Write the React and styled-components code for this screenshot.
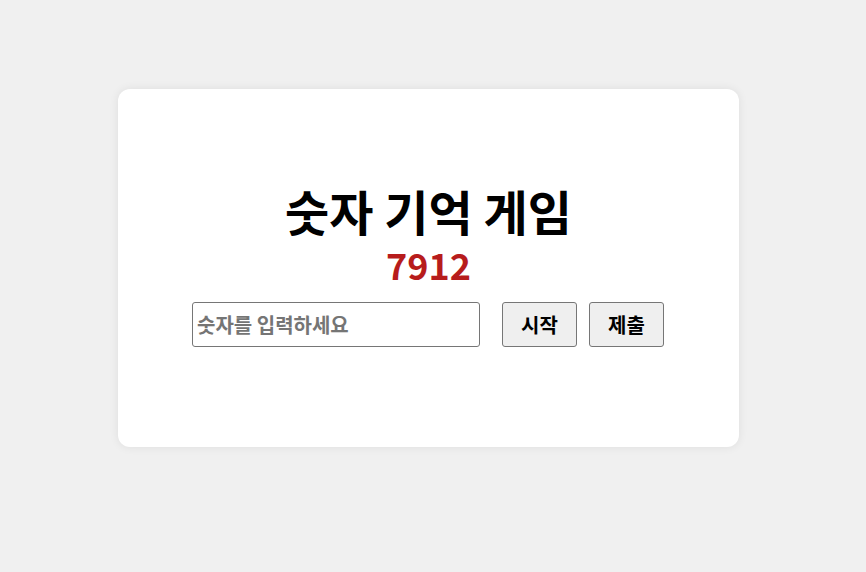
import React from "react";
import styled, { createGlobalStyle } from "styled-components";

const Global = createGlobalStyle`
  html, body { margin: 0; padding: 0; background: #f0f0f0; }
  body { font-family: "Noto Sans CJK KR", "Noto Sans", sans-serif; }
`;

const Page = styled.div`
  width: 866px;
  height: 572px;
  box-sizing: border-box;
  padding: 89px 0 0 118px;
`;

const Card = styled.div`
  width: 621px;
  height: 358px;
  box-sizing: border-box;
  padding-top: 93px;
  background: #ffffff;
  border-radius: 12px;
  box-shadow: 0 0 10px rgba(0, 0, 0, 0.08);
  display: flex;
  flex-direction: column;
  align-items: center;
`;

const Title = styled.h1`
  margin: 0;
  font-size: 48px;
  font-weight: 700;
  line-height: 56px;
  color: #000;
`;

const Number = styled.div`
  margin-top: 6px;
  font-size: 36px;
  font-weight: 700;
  line-height: 40px;
  color: #b71c1c;
  margin-bottom: 18px;
`;

const Row = styled.div`
  display: flex;
  align-items: center;
  gap: 12px;
  margin-right: 1px;
`;

const Input = styled.input`
  width: 288px;
  height: 45px;
  box-sizing: border-box;
  border: 1px solid #767676;
  border-radius: 3px;
  padding: 0 4px;
  margin-right: 10px;
  font-family: "Noto Sans CJK KR", sans-serif;
  font-size: 20px;
  font-weight: 700;
  &::placeholder { color: #757575; }
`;

const Button = styled.button`
  width: 75px;
  height: 45px;
  box-sizing: border-box;
  background: #efefef;
  border: 1px solid #767676;
  border-radius: 3px;
  font-family: "Noto Sans CJK KR", sans-serif;
  font-size: 20px;
  font-weight: 700;
  color: #000;
  padding: 0;
`;

export default function App() {
  return (
    <>
      <Global />
      <Page>
        <Card>
          <Title>숫자 기억 게임</Title>
          <Number>7912</Number>
          <Row>
            <Input placeholder="숫자를 입력하세요" />
            <Button>시작</Button>
            <Button>제출</Button>
          </Row>
        </Card>
      </Page>
    </>
  );
}
